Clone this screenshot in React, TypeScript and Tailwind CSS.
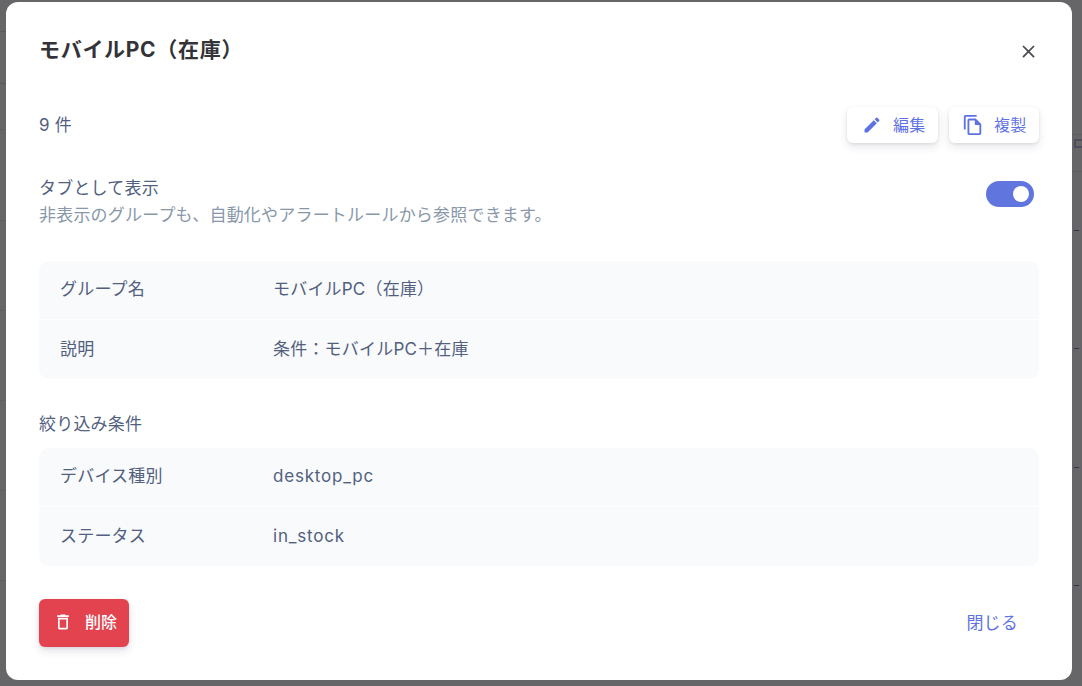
import { MdClose, MdEdit, MdOutlineFileCopy, MdDeleteOutline } from "react-icons/md";

const font = "font-['Inter','Noto_Sans_CJK_JP',sans-serif]";

function InfoTable({ rows, latin }: { rows: [string, string][]; latin?: boolean }) {
  return (
    <div className="rounded-[10px] bg-[#f9fafc] divide-y divide-white">
      {rows.map(([label, value]) => (
        <div key={label} className="flex h-[59px] items-center px-[21px] text-[17px] text-[#525f7f]">
          <div className="w-[213px] shrink-0">{label}</div>
          <div className={latin ? "tracking-[0.8px]" : ""}>{value}</div>
        </div>
      ))}
    </div>
  );
}

export default function App() {
  return (
    <div className={`${font} relative h-[686px] w-[1082px] overflow-hidden bg-[#666669] pl-[6px] pt-[2px] tracking-[0.2px]`}>
      {/* page behind the dialog, only the thin lines show through */}
      <div className="absolute left-0 top-[31px] h-px w-[6px] bg-[#57575c]" />
      <div className="absolute left-0 top-[83px] h-px w-[6px] bg-[#57575c]" />
      <div className="absolute left-0 top-[129px] h-px w-[6px] bg-[#5f5f63]" />
      <div className="absolute left-0 top-[220px] h-px w-[6px] bg-[#5f5f63]" />
      <div className="absolute left-0 top-[310px] h-px w-[6px] bg-[#5f5f63]" />
      <div className="absolute left-0 top-[400px] h-px w-[6px] bg-[#5f5f63]" />
      <div className="absolute left-0 top-[490px] h-px w-[6px] bg-[#5f5f63]" />
      <div className="absolute left-0 top-[580px] h-px w-[6px] bg-[#5f5f63]" />
      <div className="absolute right-0 top-[134px] h-px w-[10px] bg-[#5f5f63]" />
      <div className="absolute right-0 top-[171px] h-px w-[10px] bg-[#5f5f63]" />
      <div className="absolute left-[1074px] top-[139px] h-[9px] w-[8px] border-2 border-r-0 border-[#4d4d5c]" />
      <div className="absolute right-[3px] top-[230px] h-px w-[5px] bg-[#33364a]" />
      <div className="absolute right-[3px] top-[348px] h-px w-[5px] bg-[#33364a]" />
      <div className="absolute right-[3px] top-[467px] h-px w-[5px] bg-[#33364a]" />
      <div className="absolute right-[3px] top-[585px] h-px w-[5px] bg-[#33364a]" />

      <div className="relative flex h-[678px] w-[1066px] flex-col rounded-[12px] bg-white px-[33px]">
        <div className="flex items-center justify-between pt-[32px]">
          <h2 className="text-[21px] font-bold leading-[32px] tracking-[0.7px] text-[#333338]">モバイルPC（在庫）</h2>
          <button className="mt-[3px] text-[#4a4a4f]">
            <MdClose size={21} />
          </button>
        </div>

        <div className="mt-[41px] flex items-center justify-between">
          <div className="text-[17px] leading-[24px] text-[#525f7f]">9 件</div>
          <div className="flex gap-[11px]">
            <button className="flex h-[36px] w-[91px] items-center gap-[11px] rounded-[6px] bg-white pl-[15px] text-[16px] tracking-[0.2px] text-[#5e72e4] shadow-[0_4px_8px_rgba(50,50,93,0.12),0_1px_3px_rgba(0,0,0,0.08)]">
              <MdEdit size={20} />
              編集
            </button>
            <button className="flex h-[36px] w-[90px] items-center gap-[10px] rounded-[6px] bg-white pl-[13px] text-[16px] tracking-[0.2px] text-[#5e72e4] shadow-[0_4px_8px_rgba(50,50,93,0.12),0_1px_3px_rgba(0,0,0,0.08)]">
              <MdOutlineFileCopy size={22} />
              複製
            </button>
          </div>
        </div>

        <div className="mt-[32px] flex items-start justify-between">
          <div>
            <div className="text-[17px] leading-[27px] text-[#525f7f]">タブとして表示</div>
            <div className="text-[17px] leading-[27px] text-[#8898aa]">非表示のグループも、自動化やアラートルールから参照できます。</div>
          </div>
          <div className="mr-[5px] mt-[6px] flex h-[26px] w-[48px] items-center justify-end rounded-full bg-[#6175de] pr-[5px]">
            <div className="h-[16px] w-[16px] rounded-full bg-white" />
          </div>
        </div>

        <div className="mt-[32px]">
          <InfoTable
            rows={[
              ["グループ名", "モバイルPC（在庫）"],
              ["説明", "条件：モバイルPC＋在庫"],
            ]}
          />
        </div>

        <div className="mt-[33px] text-[17px] leading-[24px] text-[#525f7f]">絞り込み条件</div>
        <div className="mt-[12px]">
          <InfoTable
            latin
            rows={[
              ["デバイス種別", "desktop_pc"],
              ["ステータス", "in_stock"],
            ]}
          />
        </div>

        <div className="mt-[33px] flex items-center justify-between">
          <button className="flex h-[48px] w-[90px] items-center gap-[12px] rounded-[6px] bg-[#e2434f] pb-[2px] pl-[14px] text-[16px] font-medium tracking-[0px] text-white shadow-[0_4px_8px_rgba(50,50,93,0.14),0_1px_3px_rgba(0,0,0,0.08)]">
            <MdDeleteOutline size={20} />
            削除
          </button>
          <button className="mr-[21px] mt-[2px] text-[17px] text-[#5e72e4]">閉じる</button>
        </div>
      </div>
    </div>
  );
}
